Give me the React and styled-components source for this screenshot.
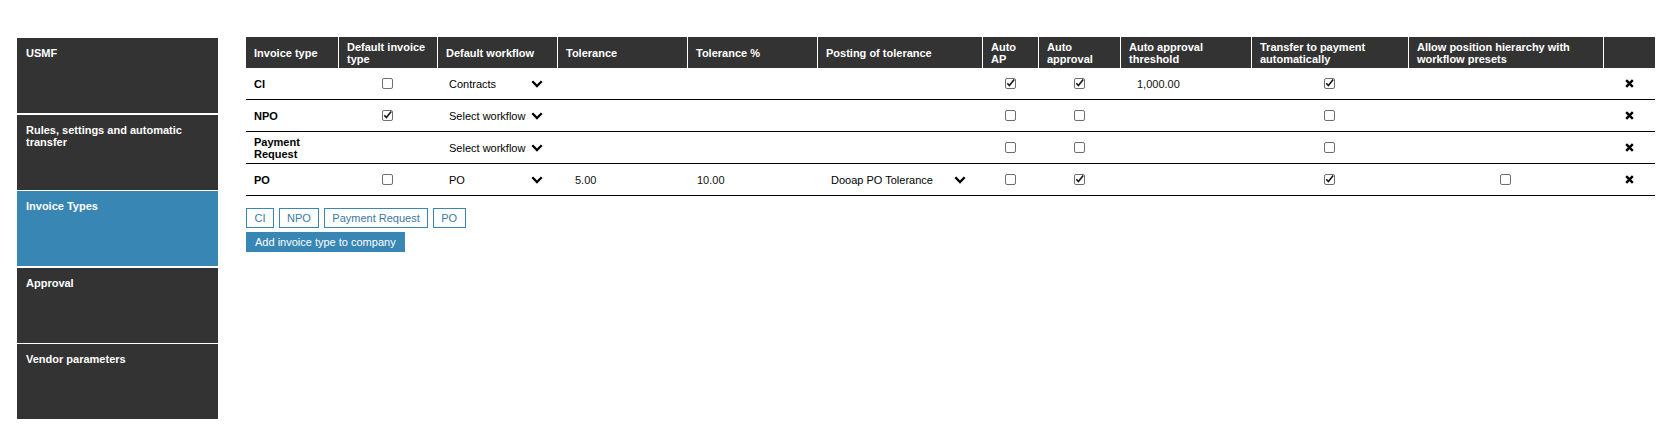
import React from "react";
import styled, { createGlobalStyle } from "styled-components";

const Global = createGlobalStyle`
  html, body { margin: 0; padding: 0; background: #fff; }
  body { font-family: "Liberation Sans", Arial, sans-serif; font-size: 11px; color: #000; }
`;

const Page = styled.div`
  display: flex;
  align-items: flex-start;
  padding: 37px 0 0 17px;
`;

const Sidebar = styled.nav`
  width: 201px;
  margin-top: 1px;
  display: flex;
  flex-direction: column;
  gap: 1.5px;
`;

const Tile = styled.div`
  height: 75px;
  box-sizing: border-box;
  padding: 9px 9px;
  background: ${(p) => (p.$active ? "#3886b4" : "#333333")};
  color: #fff;
  font-weight: bold;
  font-size: 11px;
  line-height: 12px;
`;

const Main = styled.main`
  margin-left: 28px;
  display: flex;
  flex-direction: column;
`;

const Table = styled.table`
  width: 1409px;
  table-layout: fixed;
  border-collapse: separate;
  border-spacing: 0;
`;

const HeadCell = styled.th`
  height: 31px;
  box-sizing: border-box;
  padding: 0 8px;
  background: #333333;
  color: #fff;
  font-weight: bold;
  font-size: 11px;
  line-height: 12px;
  text-align: left;
  vertical-align: middle;
  border-left: ${(p) => (p.$first ? "none" : "1px solid #fff")};
`;

const Cell = styled.td`
  height: 31px;
  padding: 0 8px;
  border-bottom: 1px solid #000;
  font-size: 11px;
  line-height: 12px;
  text-align: ${(p) => p.$align || "left"};
  vertical-align: middle;
  font-weight: ${(p) => (p.$bold ? "bold" : "normal")};
`;

const CenterBox = styled.div`
  display: flex;
  justify-content: center;
  align-items: center;
`;

const SelectBox = styled.div`
  display: flex;
  align-items: center;
  justify-content: space-between;
  padding: ${(p) => p.$pad || "0 6px 0 4px"};
  color: #000;
`;

const Amount = styled.span`
  display: inline-block;
  padding-left: ${(p) => p.$indent}px;
  color: #111;
`;

const TagRow = styled.div`
  display: flex;
  gap: 4.5px;
  margin-top: 12px;
`;

const Tag = styled.button`
  height: 20px;
  box-sizing: border-box;
  padding: 0 7.5px;
  border: 1px solid #3886b4;
  background: #fff;
  color: #3a7aa3;
  font-family: "Liberation Sans", Arial, sans-serif;
  font-size: 11px;
  line-height: 18px;
  cursor: pointer;
`;

const AddButton = styled.button`
  align-self: flex-start;
  margin-top: 4px;
  height: 20px;
  box-sizing: border-box;
  padding: 0 8px;
  border: 1px solid #3886b4;
  background: #3886b4;
  color: #fff;
  font-family: "Liberation Sans", Arial, sans-serif;
  font-size: 11px;
  line-height: 18px;
  cursor: pointer;
`;

const Checkbox = ({ checked }) => (
  <CenterBox>
    <svg width="11" height="11" viewBox="0 0 11 11">
      <rect x="0.5" y="0.5" width="10" height="10" rx="1.5" fill="#fff" stroke="#6e6e6e" />
      {checked && (
        <path d="M2.3 5.2 L4.4 7.6 L9.2 1.6" fill="none" stroke="#1a1a1a" strokeWidth="1.6" />
      )}
    </svg>
  </CenterBox>
);

const Chevron = () => (
  <svg width="12" height="8" viewBox="0 0 12 8">
    <polyline points="1.3,1.3 6,6 10.7,1.3" fill="none" stroke="#000" strokeWidth="2.3" />
  </svg>
);

const RemoveIcon = () => (
  <CenterBox>
    <svg width="9" height="9" viewBox="0 0 9 9">
      <path d="M1.2 1.2 L7.8 7.8 M7.8 1.2 L1.2 7.8" stroke="#000" strokeWidth="2.4" />
    </svg>
  </CenterBox>
);

const Select = ({ value, pad }) => (
  <SelectBox $pad={pad}>
    <span>{value}</span>
    <Chevron />
  </SelectBox>
);

const columns = [
  { title: "Invoice type", w: 92 },
  { title: "Default invoice type", w: 99 },
  { title: "Default workflow", w: 120 },
  { title: "Tolerance", w: 130 },
  { title: "Tolerance %", w: 130 },
  { title: "Posting of tolerance", w: 165 },
  { title: "Auto AP", w: 56 },
  { title: "Auto approval", w: 82 },
  { title: "Auto approval threshold", w: 131 },
  { title: "Transfer to payment automatically", w: 157 },
  { title: "Allow position hierarchy with workflow presets", w: 195 },
  { title: "", w: 52 },
];

const rows = [
  { name: "CI", def: false, wf: "Contracts", autoAp: true, autoAppr: true, threshold: "1,000.00", transfer: true },
  { name: "NPO", def: true, wf: "Select workflow", autoAp: false, autoAppr: false, transfer: false },
  { name: "Payment Request", def: null, wf: "Select workflow", autoAp: false, autoAppr: false, transfer: false },
  {
    name: "PO",
    def: false,
    wf: "PO",
    tol: "5.00",
    tolPct: "10.00",
    posting: "Dooap PO Tolerance",
    autoAp: false,
    autoAppr: true,
    transfer: true,
    hierarchy: false,
  },
];

const sideItems = [
  { label: "USMF" },
  { label: "Rules, settings and automatic transfer" },
  { label: "Invoice Types", active: true },
  { label: "Approval" },
  { label: "Vendor parameters" },
];

export default function App() {
  return (
    <>
      <Global />
      <Page>
        <Sidebar>
          {sideItems.map((s) => (
            <Tile key={s.label} $active={s.active}>
              {s.label}
            </Tile>
          ))}
        </Sidebar>
        <Main>
          <Table>
            <colgroup>
              {columns.map((c, i) => (
                <col key={i} style={{ width: c.w }} />
              ))}
            </colgroup>
            <thead>
              <tr>
                {columns.map((c, i) => (
                  <HeadCell key={i} $first={i === 0}>
                    {c.title}
                  </HeadCell>
                ))}
              </tr>
            </thead>
            <tbody>
              {rows.map((r) => (
                <tr key={r.name}>
                  <Cell $bold>{r.name}</Cell>
                  <Cell>{r.def !== null && <Checkbox checked={r.def} />}</Cell>
                  <Cell>
                    <Select value={r.wf} />
                  </Cell>
                  <Cell>{r.tol && <Amount $indent={10}>{r.tol}</Amount>}</Cell>
                  <Cell>{r.tolPct && <Amount $indent={2}>{r.tolPct}</Amount>}</Cell>
                  <Cell>{r.posting && <Select value={r.posting} pad="0 8px 0 6px" />}</Cell>
                  <Cell>
                    <Checkbox checked={r.autoAp} />
                  </Cell>
                  <Cell>
                    <Checkbox checked={r.autoAppr} />
                  </Cell>
                  <Cell>{r.threshold && <Amount $indent={9}>{r.threshold}</Amount>}</Cell>
                  <Cell>
                    <Checkbox checked={r.transfer} />
                  </Cell>
                  <Cell>{r.hierarchy !== undefined && <Checkbox checked={r.hierarchy} />}</Cell>
                  <Cell>
                    <RemoveIcon />
                  </Cell>
                </tr>
              ))}
            </tbody>
          </Table>
          <TagRow>
            {["CI", "NPO", "Payment Request", "PO"].map((t) => (
              <Tag key={t}>{t}</Tag>
            ))}
          </TagRow>
          <AddButton>Add invoice type to company</AddButton>
        </Main>
      </Page>
    </>
  );
}
